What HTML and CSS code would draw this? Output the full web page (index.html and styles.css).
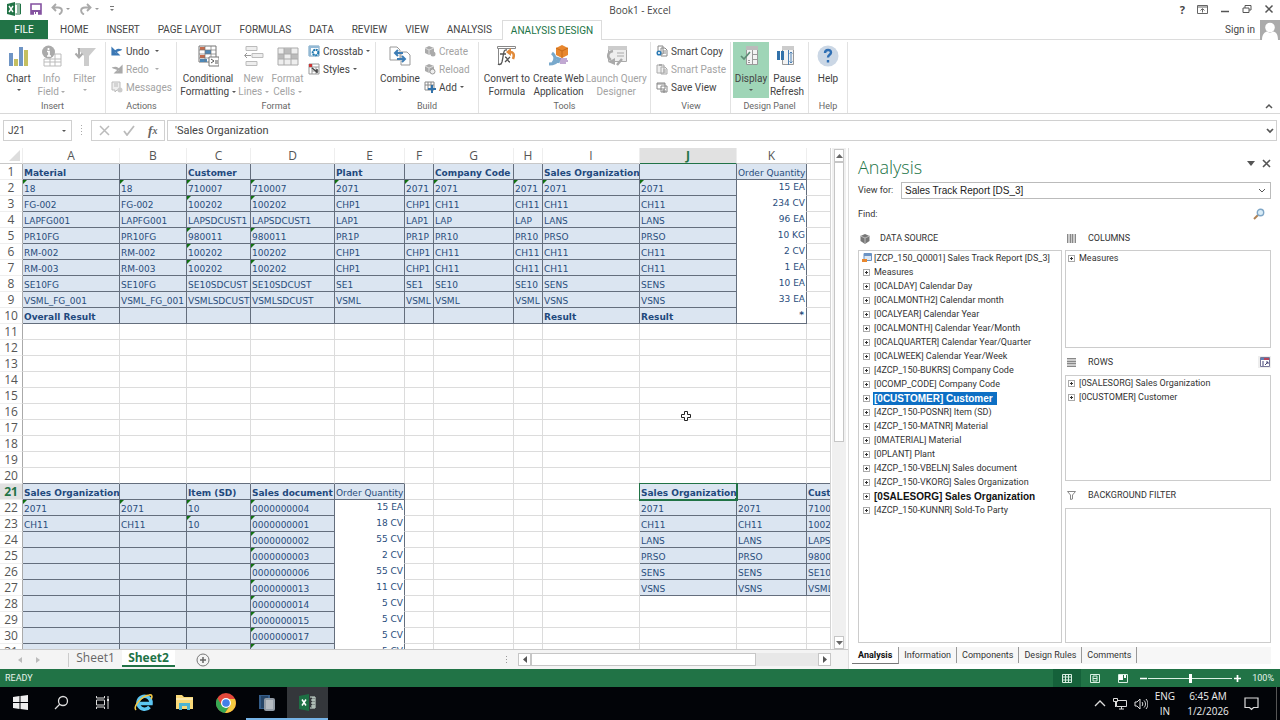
FILE: index.html
```html
<!DOCTYPE html>
<html lang="en">
<head>
<meta charset="utf-8">
<title>Book1 - Excel</title>
<link rel="stylesheet" href="styles.css">
</head>
<body>
<div class="app">
  <header class="titlebar">
    <div class="quick">
      <svg width="14" height="14" viewBox="0 0 14 14"><path fill="#217346" d="M0 2 8 0v14l-8-2z"/><path d="M8.500 2h5v10h-5M10 4h3M10 6h3M10 8h3M10 10h3" fill="none" stroke="#217346"/><path d="m2 4 4 6M6 4 2 10" stroke="#fff" stroke-width="1.400"/></svg>
      <button aria-label="Save"><svg width="12" height="12" viewBox="0 0 12 12"><path d="M1 1h10v10H1z" fill="#fff" stroke="#8452a0" stroke-width="1.600"/><path d="M1 7h10v4H1z" fill="#8452a0"/><path d="M4 9h4v3H4z" fill="#fff"/><path d="M5 9h1v2H5z" fill="#8452a0"/></svg></button>
      <button aria-label="Undo"><svg width="20" height="12" viewBox="0 0 20 12"><path d="M5 1 1.500 4.500 5 8M2 4.500h5c5 0 5 5 1 7" fill="none" stroke="#aaa" stroke-width="1.900"/><path d="M15 5h4l-2 2z" fill="#999"/></svg></button>
      <button aria-label="Redo"><svg width="20" height="12" viewBox="0 0 20 12"><path d="m7 1 3.500 3.500L7 8M10 4.500H5c-5 0-5 5-1 7" fill="none" stroke="#aaa" stroke-width="1.900"/><path d="M15 5h4l-2 2z" fill="#999"/></svg></button>
      <button aria-label="Customize"><svg width="6" height="8" viewBox="0 0 6 8"><path d="M1 1.500h4" stroke="#777"/><path d="M1 4h4L3 6z" fill="#777"/></svg></button>
    </div>
    <div class="doc-title">Book1 - Excel</div>
    <div class="window-controls">
      <button aria-label="Help" class="q">?</button>
      <button aria-label="Ribbon display"><svg width="11" height="9" viewBox="0 0 11 9"><path d="M.5.500h10v8H.500zM.5 2h10M5.500 7.500V4M3.500 5.500l2-2 2 2" fill="none" stroke="#666"/></svg></button>
      <button aria-label="Minimize"><svg width="10" height="10" viewBox="0 0 10 10"><path d="M1 7.500h8" stroke="#555" stroke-width="1.500"/></svg></button>
      <button aria-label="Restore"><svg width="10" height="10" viewBox="0 0 10 10"><path d="M1 4h6v4.500H1zM3 4V1.500h6v4.500H7" fill="none" stroke="#555"/></svg></button>
      <button aria-label="Close"><svg width="10" height="10" viewBox="0 0 10 10"><path d="m1.500 1.500 7 7m0-7-7 7" stroke="#555" stroke-width="1.500"/></svg></button>
    </div>
  </header>

  <nav class="tabs">
    <button class="file">FILE</button>
    <button class="tab">HOME</button>
    <button class="tab">INSERT</button>
    <button class="tab">PAGE LAYOUT</button>
    <button class="tab">FORMULAS</button>
    <button class="tab">DATA</button>
    <button class="tab">REVIEW</button>
    <button class="tab">VIEW</button>
    <button class="tab">ANALYSIS</button>
    <button class="tab active">ANALYSIS DESIGN</button>
    <a class="signin" href="#">Sign in</a>
    <svg width="20" height="20" viewBox="0 0 20 20"><path fill="#ababab" d="M0 0h20v20H0z"/><circle cx="10" cy="7.500" r="4.800" fill="#fff"/><path d="M2 20c0-6 3-8 5-8.500 2 1.500 4 1.500 6 0 3 .5 5 2.500 5 8.500z" fill="#fff"/></svg>
  </nav>

  <section class="ribbon" aria-label="Ribbon">
    <div class="group g-insert">
      <div class="group-body">
        <button class="big w33"><svg width="22" height="22" viewBox="0 0 22 22"><path fill="#6f95c5" d="M1 8h4v13H1zM11 2h4v19h-4z"/><path fill="#c5bf60" d="M6 14h4v7H6zM16 5h4v16h-4z"/></svg><span>Chart</span><i class="caret"></i></button>
        <button class="big w33" disabled><svg width="22" height="22" viewBox="0 0 22 22"><path d="M5 9h15v12H3v-7M3 14h17M3 17h17M9 9v12M14 9v12" fill="none" stroke="#bbb"/><circle cx="7.500" cy="7" r="6.500" fill="#aaa"/><path d="M7.500 3v2M6 6.500h2V11M6 11h4" stroke="#fff" stroke-width="1.700" fill="none"/></svg><span>Info<br>Field <i class="caret"></i></span></button>
        <button class="big w33" disabled><svg width="22" height="22" viewBox="0 0 22 22"><path d="M3 3h19l-7 8v10h-5V11z" fill="#ccc"/><path d="M5 3v9M1.500 8.500l3.500 4 3.500-4" stroke="#aaa" stroke-width="2" fill="none"/></svg><span>Filter</span><i class="caret"></i></button>
      </div>
      <div class="group-label">Insert</div>
    </div>
    <div class="group g-actions">
      <div class="group-body">
        <div class="stack">
          <button class="small"><svg width="12" height="12" viewBox="0 0 12 12"><path d="M1 3v7h7zM3 8c2-4 4-4 8-3" fill="#3b78b5" stroke="#3b78b5" stroke-width="1.200"/><path d="M5 9c2-2 4-2 6-1V5z" fill="#fff"/></svg>Undo <i class="caret far"></i></button>
          <button class="small" disabled><svg width="12" height="12" viewBox="0 0 12 12"><path d="M11 3v7H4zM9 8C7 4 5 4 1 5" fill="#aaa" stroke="#aaa" stroke-width="1.200"/><path d="M7 9C5 7 3 7 1 8V5z" fill="#fff"/></svg>Redo <i class="caret far"></i></button>
          <button class="small" disabled><svg width="12" height="12" viewBox="0 0 12 12"><path d="M1 1h8v8H6L4 11V9H1zM3 3h4M3 5h4" fill="#eee" stroke="#bbb"/><circle cx="9" cy="9" r="2.500" fill="#ccc"/></svg>Messages</button>
        </div>
      </div>
      <div class="group-label">Actions</div>
    </div>
    <div class="group g-format">
      <div class="group-body">
        <button class="big w58"><svg width="22" height="22" viewBox="0 0 22 22"><path d="M2 1h17v16H2z" fill="#fff" stroke="#777"/><path d="M3 2h5v3H3zM3 10h5v3H3z" fill="#c56a4b"/><path d="M8 5h6v4H8zM3 14h7v3H3z" fill="#4d88b8"/><path d="M2 5h17M2 9h17M2 13h17M8 1v16M14 1v16" stroke="#777" stroke-width=".7"/><path d="M12 12h10v9H12z" fill="#fff" stroke="#777"/><path d="m14 14 3 2-3 2m4-2h3m-3 2h3" fill="none" stroke="#555"/></svg><span>Conditional<br>Formatting <i class="caret"></i></span></button>
        <button class="big w33" disabled><svg width="22" height="22" viewBox="0 0 22 22"><path d="M3 1.500h11v4H3zM9 8.500h11v4H9zM3 16.500h11v4H3z" fill="#eee" stroke="#bbb"/><path d="M8 10.500H2M4 8l-2.500 2.500L4 13" fill="none" stroke="#999"/></svg><span>New<br>Lines <i class="caret"></i></span></button>
        <button class="big w35" disabled><svg width="22" height="22" viewBox="0 0 22 22"><path d="M1 3h20v17H1z" fill="#eee" stroke="#aaa"/><path d="M7 3h7v6H7zM1 9h6v5H1zM14 9h7v5h-7z" fill="#bbb"/><path d="M1 9h20M1 14h20M7 3v17M14 3v17" stroke="#aaa"/></svg><span>Format<br>Cells <i class="caret"></i></span></button>
        <div class="stack">
          <button class="small"><svg width="12" height="12" viewBox="0 0 12 12"><path d="M1 1h10v10H1z" fill="#fff" stroke="#6b9cbf"/><path d="M1 1h10v2H1zM1 1h2v10H1z" fill="#93b9d5"/><circle cx="7.500" cy="7.500" r="2.800" fill="#fff" stroke="#1e78b0" stroke-width="2" stroke-dasharray="2 .6"/></svg>Crosstab <i class="caret"></i></button>
          <button class="small"><svg width="12" height="12" viewBox="0 0 12 12"><path d="M1 1h10v10H1zM1 4h10M4 1v10M8 4v7M4 8h7" fill="#fff" stroke="#999"/><path d="M1 1h3v3H1z" fill="#c33"/><path d="m4 5 5 4M9 6v4" stroke="#444" stroke-width="1.500"/></svg>Styles <i class="caret"></i></button>
        </div>
      </div>
      <div class="group-label">Format</div>
    </div>
    <div class="group g-build">
      <div class="group-body">
        <button class="big w44"><svg width="22" height="22" viewBox="0 0 22 22"><path d="M1 2h7l3 3v10H1zM12 7h6l3 3v10h-9z" fill="#fff" stroke="#999"/><path d="M6 8h8M9 5 6 8l3 3M8 14h8M13 11l3 3-3 3" fill="none" stroke="#3d7db5" stroke-width="2"/></svg><span>Combine</span><i class="caret"></i></button>
        <div class="stack">
          <button class="small" disabled><svg width="12" height="12" viewBox="0 0 12 12"><path d="m5 1 5 2v5L5 10 1 8V3z" fill="#aaa"/><path d="m1 3 4 2 5-2M5 5v5" stroke="#ddd" fill="none"/><circle cx="9" cy="9" r="2.500" fill="#aaa"/></svg>Create</button>
          <button class="small" disabled><svg width="12" height="12" viewBox="0 0 12 12"><path d="m5 1 5 2v5L5 10 1 8V3z" fill="#aaa"/><path d="m1 3 4 2 5-2M5 5v5" stroke="#ddd" fill="none"/><circle cx="8.500" cy="8.500" r="2.500" fill="#eee" stroke="#999"/></svg>Reload</button>
          <button class="small"><svg width="12" height="12" viewBox="0 0 12 12"><path d="M1 1h9v8H1zM1 4h9M4 1v8M7 1v8" fill="#fff" stroke="#888"/><path d="M8 4v8M4 8h8" stroke="#3272aa" stroke-width="2"/></svg>Add <i class="caret"></i></button>
        </div>
      </div>
      <div class="group-label">Build</div>
    </div>
    <div class="group g-tools">
      <div class="group-body">
        <button class="big w52"><svg width="22" height="22" viewBox="0 0 22 22"><path d="M1.500 1.500h18v2h-18zM2.500 4v15h3" fill="#fff" stroke="#888"/><path d="M11 5c-4-1-3 4-5 12-1 3-3 3-4 2M4 9h6M9 12c3 0 2 5 5 5m0-5-5 5" fill="none" stroke="#555" stroke-width="1.300"/><path d="M17 14c2-5 0-7-3-7" fill="none" stroke="#e18a3a" stroke-width="2.500"/><path d="M15 3v8l-5-4z" fill="#e18a3a"/></svg><span>Convert to<br>Formula</span></button>
        <button class="big w52"><svg width="22" height="22" viewBox="0 0 22 22"><path d="m14 0 6 3v7l-6 3-6-3V3z" fill="#e8872e"/><path d="m8 3 6 3 6-3M14 6v7" stroke="#c86a18" fill="none"/><path d="M4 8c4 3 4 6 1 10M1 19c5 0 8-1 10-5M8 13l3 1-1 4" fill="none" stroke="#79a9cc" stroke-width="3"/><path d="M12 14h7M12 16h8M12 18h6" stroke="#8353a5"/></svg><span>Create Web<br>Application</span></button>
        <button class="big w64" disabled><svg width="22" height="22" viewBox="0 0 22 22"><path d="M3.500 1.500h18v15h-18z" fill="#eee" stroke="#aaa"/><path d="M3 1h19v4H3z" fill="#ccc"/><path d="M12 8h7M12 11h7" stroke="#aaa"/><path d="M8 6c-6 1-6 7-2 9M12 20l5-6" fill="none" stroke="#aaa" stroke-width="2.500"/><path d="m3 17 7-4v7z" fill="#aaa"/></svg><span>Launch Query<br>Designer</span></button>
      </div>
      <div class="group-label">Tools</div>
    </div>
    <div class="group g-view">
      <div class="group-body">
        <div class="stack">
          <button class="small"><svg width="12" height="12" viewBox="0 0 12 12"><path d="M2 1h5v8H2zM5 3h4l2 2v6H5zM7 6h3M7 8h3" fill="#fff" stroke="#888"/><circle cx="3" cy="8" r="1.800" fill="#fff" stroke="#2a7ab5" stroke-width="1.500"/></svg>Smart Copy</button>
          <button class="small" disabled><svg width="12" height="12" viewBox="0 0 12 12"><path d="M1 2h7v8H1zM5 4h4l2 2v5H5zM7 7h3M7 9h3" fill="#eee" stroke="#aaa"/><path d="M3 1h3v2H3z" fill="#aaa"/></svg>Smart Paste</button>
          <button class="small"><svg width="12" height="12" viewBox="0 0 12 12"><path d="M1 2h8v6H1zM1 3h8M5 5h6v6H5zM7 9h2v2H7z" fill="#fff" stroke="#888"/></svg>Save View</button>
        </div>
      </div>
      <div class="group-label">View</div>
    </div>
    <div class="group g-panel">
      <div class="group-body">
        <button class="big w36 on"><svg width="22" height="22" viewBox="0 0 22 22"><path d="M6.500 1.500h11v18h-11z" fill="#f3f3f3" stroke="#999"/><path d="M6 1h12v4H6z" fill="#bbb"/><path d="M12.500 5v15M12 9.500h5M12 14.500h5M8 15.500h2M8 17.500h2" stroke="#999"/><path d="m1 11 3 3 6-7" fill="none" stroke="#5d8d75" stroke-width="1.700"/></svg><span>Display</span><i class="caret"></i></button>
        <button class="big w36"><svg width="22" height="22" viewBox="0 0 22 22"><path d="M6.500 1.500h11v18h-11z" fill="#f3f3f3" stroke="#999"/><path d="M6 1h12v4H6z" fill="#ccc"/><path d="M12.500 5v15M15 7v11M13.500 8.500 15 7l1.500 1.500M13.500 16.500 15 18l1.500-1.500" fill="none" stroke="#4d81b5"/><path d="M1 6h3v9H1zM5 6h3v9H5z" fill="#3272aa"/></svg><span>Pause<br>Refresh</span></button>
      </div>
      <div class="group-label">Design Panel</div>
    </div>
    <div class="group g-help">
      <div class="group-body">
        <button class="big w36"><svg width="22" height="22" viewBox="0 0 22 22"><circle cx="11" cy="11" r="10.500" fill="#cbd7e5"/><path d="M8 8c0-4 6-4 6-.5 0 2.500-3 2-3 5M11 15v2.500" fill="none" stroke="#2f6fb4" stroke-width="2.400"/></svg><span>Help</span></button>
      </div>
      <div class="group-label">Help</div>
    </div>
    <button class="collapse" aria-label="Collapse ribbon"><svg width="8" height="6" viewBox="0 0 8 6"><path d="m1 5 3-3 3 3" fill="none" stroke="#555" stroke-width="1.500"/></svg></button>
  </section>

  <section class="formula-bar">
    <div class="name-box"><input aria-label="Name box" value="J21"><i class="caret"></i></div>
    <svg class="dots" width="3" height="10" viewBox="0 0 3 10"><path d="M1.500 0v10" stroke="#aaa" stroke-dasharray="1 2"/></svg>
    <div class="fx-box">
      <button aria-label="Cancel"><svg width="11" height="11" viewBox="0 0 11 11"><path d="m1 1 9 9m0-9-9 9" stroke="#bbb" stroke-width="1.500"/></svg></button>
      <button aria-label="Enter"><svg width="12" height="11" viewBox="0 0 12 11"><path d="m1 6 3 4 7-9" fill="none" stroke="#bbb" stroke-width="1.800"/></svg></button>
      <button aria-label="Insert function" class="fx">f<small>x</small></button>
    </div>
    <div class="formula"><input aria-label="Formula" value="'Sales Organization"><svg width="8" height="6" viewBox="0 0 8 6"><path d="m1 1 3 3 3-3" fill="none" stroke="#555" stroke-width="1.700"/></svg></div>
  </section>

  <main class="workspace">
    <div class="book">
      <div class="sheet-area">
        <div class="sheet"><table class="grid" id="grid"></table>
          <svg class="cursor" width="12" height="12" viewBox="0 0 12 12"><path d="M4.500 1.500h3v3h3v3h-3v3h-3v-3h-3v-3h3z" fill="#fff" stroke="#222"/></svg>
        </div>
        <div class="vscroll">
          <button aria-label="Scroll up"><svg width="7" height="4" viewBox="0 0 7 4"><path d="M0 4h7L3.500 0z" fill="#666"/></svg></button>
          <div class="vthumb"></div>
          <button aria-label="Scroll down" class="end"><svg width="7" height="4" viewBox="0 0 7 4"><path d="M0 0h7L3.500 4z" fill="#666"/></svg></button>
        </div>
      </div>
      <div class="sheet-bar">
        <div class="sheet-nav">
          <button aria-label="Previous sheet"><svg width="4" height="6" viewBox="0 0 4 6"><path d="M4 0v6L0 3z" fill="#bbb"/></svg></button>
          <button aria-label="Next sheet"><svg width="4" height="6" viewBox="0 0 4 6"><path d="M0 0v6l4-3z" fill="#bbb"/></svg></button>
        </div>
        <button class="sheet-tab">Sheet1</button>
        <button class="sheet-tab active">Sheet2</button>
        <button class="add" aria-label="New sheet"><svg width="14" height="14" viewBox="0 0 14 14"><circle cx="7" cy="7" r="6" fill="none" stroke="#777"/><path d="M7 4v6M4 7h6" stroke="#666" stroke-width="1.500"/></svg></button>
        <svg class="grip" width="3" height="8" viewBox="0 0 3 8"><path d="M1.500 0v8" stroke="#999" stroke-dasharray="1 2"/></svg>
        <div class="hscroll">
          <button aria-label="Scroll left"><svg width="4" height="7" viewBox="0 0 4 7"><path d="M4 0v7L0 3.500z" fill="#555"/></svg></button>
          <div class="hthumb"></div>
          <button aria-label="Scroll right" class="end"><svg width="4" height="7" viewBox="0 0 4 7"><path d="M0 0v7l4-3.500z" fill="#555"/></svg></button>
        </div>
      </div>
    </div>

    <aside class="panel">
      <div class="panel-head">
        <h1>Analysis</h1>
        <button aria-label="Pane options"><svg width="8" height="5" viewBox="0 0 8 5"><path d="M0 0h8L4 5z" fill="#555"/></svg></button>
        <button aria-label="Close pane"><svg width="9" height="9" viewBox="0 0 9 9"><path d="m1 1 7 7m0-7L1 8" stroke="#555" stroke-width="1.600"/></svg></button>
      </div>
      <div class="view-for">
        <label for="view">View for:</label>
        <div class="select"><select id="view"><option>Sales Track Report [DS_3]</option></select><svg width="8" height="5" viewBox="0 0 8 5"><path d="m1 1 3 3 3-3" fill="none" stroke="#555"/></svg></div>
      </div>
      <div class="find">
        <label for="find">Find:</label><input id="find">
        <button aria-label="Search"><svg width="12" height="12" viewBox="0 0 12 12"><path d="m1 11 4-4" stroke="#b08254" stroke-width="2"/><circle cx="7.500" cy="4.500" r="3.200" fill="#d9ecf7" stroke="#7fa6c6" stroke-width="1.400"/></svg></button>
      </div>
      <div class="panes">
        <section class="pane source">
          <h2><svg width="10" height="10" viewBox="0 0 10 10"><path d="m5 0 4.500 2v5L5 10 .5 7V2z" fill="#777"/><path d="m.5 2 4.500 2 4.500-2M5 4v6" fill="none" stroke="#bbb"/></svg>DATA SOURCE</h2>
          <ul class="tree box">
            <li class="root"><svg width="10" height="10" viewBox="0 0 10 10"><path d="M2 .5h7.500v7H2z" fill="#dce8f5" stroke="#6b93c4"/><path d="M2 1h8v2H2z" fill="#6b93c4"/><path d="M0 6h5v3H0z" fill="#e8872e"/></svg><span>[ZCP_150_Q0001] Sales Track Report [DS_3]</span></li>
            <li><b class="plus"></b><span>Measures</span></li>
            <li><b class="plus"></b><span>[0CALDAY] Calendar Day</span></li>
            <li><b class="plus"></b><span>[0CALMONTH2] Calendar month</span></li>
            <li><b class="plus"></b><span>[0CALYEAR] Calendar Year</span></li>
            <li><b class="plus"></b><span>[0CALMONTH] Calendar Year/Month</span></li>
            <li><b class="plus"></b><span>[0CALQUARTER] Calendar Year/Quarter</span></li>
            <li><b class="plus"></b><span>[0CALWEEK] Calendar Year/Week</span></li>
            <li><b class="plus"></b><span>[4ZCP_150-BUKRS] Company Code</span></li>
            <li><b class="plus"></b><span>[0COMP_CODE] Company Code</span></li>
            <li><b class="plus"></b><span class="strong selected">[0CUSTOMER] Customer</span></li>
            <li><b class="plus"></b><span>[4ZCP_150-POSNR] Item (SD)</span></li>
            <li><b class="plus"></b><span>[4ZCP_150-MATNR] Material</span></li>
            <li><b class="plus"></b><span>[0MATERIAL] Material</span></li>
            <li><b class="plus"></b><span>[0PLANT] Plant</span></li>
            <li><b class="plus"></b><span>[4ZCP_150-VBELN] Sales document</span></li>
            <li><b class="plus"></b><span>[4ZCP_150-VKORG] Sales Organization</span></li>
            <li><b class="plus"></b><span class="strong">[0SALESORG] Sales Organization</span></li>
            <li><b class="plus"></b><span>[4ZCP_150-KUNNR] Sold-To Party</span></li>
          </ul>
        </section>
        <div class="axes">
          <section class="pane columns">
            <h2><svg width="9" height="9" viewBox="0 0 9 9"><path d="M0 0h9v9H0z" fill="#ccc"/><path d="M.5 0v9M3.500 0v9M5.500 0v9M8.500 0v9" stroke="#888"/></svg>COLUMNS</h2>
            <ul class="tree box"><li><b class="plus"></b><span>Measures</span></li></ul>
          </section>
          <section class="pane rows">
            <h2><svg width="9" height="9" viewBox="0 0 9 9"><path d="M0 0h9v9H0z" fill="#ccc"/><path d="M0 .5h9M0 3.500h9M0 5.500h9M0 8.500h9" stroke="#888"/></svg>ROWS<button aria-label="Swap axes"><svg width="10" height="10" viewBox="0 0 10 10"><path d="M.5.500h9v9h-9z" fill="#fff" stroke="#779"/><path d="M1 1h3v2H1z" fill="#5b7fb5"/><path d="M4 1h5v2H4z" fill="#b5445b"/><path d="M3 4v5M5 8l3-3M6 5h2v2" stroke="#447" fill="none"/></svg></button></h2>
            <ul class="tree box"><li><b class="plus"></b><span>[0SALESORG] Sales Organization</span></li><li><b class="plus"></b><span>[0CUSTOMER] Customer</span></li></ul>
          </section>
          <section class="pane background">
            <h2><svg width="9" height="9" viewBox="0 0 9 9"><path d="M.5.500h8L5.500 4v4l-2 .5V4z" fill="none" stroke="#888"/></svg>BACKGROUND FILTER</h2>
            <ul class="tree box"></ul>
          </section>
        </div>
      </div>
      <nav class="panel-tabs">
        <button class="active">Analysis</button><button>Information</button><button>Components</button><button>Design Rules</button><button>Comments</button>
      </nav>
    </aside>
  </main>

  <footer class="status">
    <span>READY</span>
    <button class="view-mode on" aria-label="Normal view"><svg width="10" height="9" viewBox="0 0 10 9"><path d="M.5.500h9v8h-9zM.5 3h9M.5 6h9M3.500.5v8M6.500.5v8" fill="none" stroke="#d9efe2"/></svg></button>
    <button class="view-mode" aria-label="Page layout"><svg width="10" height="9" viewBox="0 0 10 9"><path d="M.5.500h9v8h-9zM3 2h4v5H3zM3 4.500h4" fill="none" stroke="#d9efe2"/></svg></button>
    <button class="view-mode" aria-label="Page break preview"><svg width="10" height="9" viewBox="0 0 10 9"><path d="M.5.500h9v8h-9z" fill="none" stroke="#d9efe2"/><path d="M1 1h4v5H1zM6 1h2v3H6z" fill="#fff"/></svg></button>
    <button class="zoom-step" aria-label="Zoom out"><svg width="7" height="7" viewBox="0 0 7 7"><path d="M0 3.500h7" stroke="#fff" stroke-width="1.500"/></svg></button>
    <input class="zoom" type="range" min="0" max="100" value="50" aria-label="Zoom">
    <button class="zoom-step" aria-label="Zoom in"><svg width="7" height="7" viewBox="0 0 7 7"><path d="M0 3.500h7M3.500 0v7" stroke="#fff" stroke-width="1.700"/></svg></button>
    <span class="percent">100%</span>
  </footer>

  <footer class="taskbar">
    <button aria-label="Start"><svg width="15" height="15" viewBox="0 0 15 15"><path d="m0 2 6.500-1v6H0zM7.500 1 15 0v7H7.500zM0 8h6.500v6L0 13zM7.500 8H15v7l-7.500-1z" fill="#eee"/></svg></button>
    <button aria-label="Search"><svg width="15" height="15" viewBox="0 0 15 15"><circle cx="9" cy="6" r="4.500" fill="none" stroke="#ddd" stroke-width="1.300"/><path d="m6 9-5 5" stroke="#ddd" stroke-width="1.300"/></svg></button>
    <button aria-label="Task view"><svg width="15" height="13" viewBox="0 0 15 13"><path d="M1.500 4h8v5h-8zM1.500 0v2h8V0M1.500 13v-2h8v2M13 0v13" fill="none" stroke="#ddd"/><path d="M12 3h2v2h-2z" fill="#ddd"/></svg></button>
    <button aria-label="Internet Explorer"><svg width="20" height="20" viewBox="0 0 20 20"><path d="M15.500 14A6.500 6.500 0 1 1 17 10.500H6" fill="none" stroke="#5cc6f2" stroke-width="3.600"/><path d="M2 17C-1 14 7 3 15 2c4-1 3 3 2 4" fill="none" stroke="#f3c845" stroke-width="1.600"/></svg></button>
    <button aria-label="File Explorer"><svg width="19" height="17" viewBox="0 0 19 17"><path d="M1 1h6l2 2h9v12H1z" fill="#f9d978"/><path d="M1 4h17v2H1z" fill="#fbe9ac"/><path d="M4 9h11v7h-3v-4H7v4H4z" fill="#4db4d2"/></svg></button>
    <button aria-label="Chrome"><svg width="20" height="20" viewBox="0 0 20 20"><circle cx="10" cy="10" r="10" fill="#e4493c"/><path d="M1.300 5A10 10 0 0 0 9 20l5-8-8.500 0z" fill="#36a852"/><path d="M19 6H10l4.500 6L9 20A10 10 0 0 0 19 6z" fill="#f6cb3f"/><circle cx="10" cy="10" r="5" fill="#fff"/><circle cx="10" cy="10" r="3.800" fill="#437fe8"/></svg></button>
    <button aria-label="SAP Logon" class="running"><svg width="18" height="18" viewBox="0 0 18 18"><path d="M1 1h11v14H1z" fill="#345d8a"/><path d="M3 2h7v12H3z" fill="#254466"/><rect x="6" y="4" width="11" height="13" rx="2" fill="#929ba5"/><path d="M8 6h7v9H8z" fill="#b6bcc2"/></svg></button>
    <button aria-label="Excel" class="running current"><svg width="17" height="17" viewBox="0 0 17 17"><path d="M0 2 10 0v17L0 15z" fill="#1d7044"/><path d="M11 3h5v11h-5M14 3v11M12 6h4M12 9h4M12 12h4" fill="none" stroke="#d7eadf"/><path d="m3 5.500 4 6m0-6-4 6" stroke="#fff" stroke-width="1.500"/></svg></button>
    <div class="tray">
      <svg width="12" height="7" viewBox="0 0 12 7"><path d="m1 6 5-5 5 5" fill="none" stroke="#ddd" stroke-width="1.300"/></svg>
      <svg width="14" height="12" viewBox="0 0 14 12"><path d="M3.500 2.500h10v6h-10zM6 11h5M8.500 9v2" fill="none" stroke="#ddd"/><path d="M.5.500h4v3h-4zM2.500 4v5" fill="#000" stroke="#ddd"/></svg>
      <svg width="14" height="12" viewBox="0 0 14 12"><path d="M1 4h2l3-3v10L3 8H1zM8 4c1 1 1 3 0 4M10 2.500c2 2 2 5 0 7M12 1c2.500 3 2.500 7 0 10" fill="none" stroke="#ddd"/></svg>
      <div class="lang">ENG<br>IN</div>
      <div class="clock">6:45 AM<br>1/2/2026</div>
      <svg class="note" width="15" height="14" viewBox="0 0 15 14"><path d="M1 1h13v9.500H9.500l-2 2-2-2H1z" fill="none" stroke="#ddd" stroke-width="1.200"/></svg>
    </div>
  </footer>
</div>
<script src="grid.js"></script>
</body>
</html>
```

FILE: styles.css
```css
* { box-sizing: border-box; }
body { margin: 0; font-family: Roboto, "Open Sans", sans-serif; font-size: 10px; line-height: 13px; color: #444; background: #fff; }
button, input, select { font: inherit; color: inherit; background: none; border: 0; padding: 0; margin: 0; outline: 0; }
button { display: flex; align-items: center; justify-content: center; white-space: nowrap; }
svg { flex: none; display: block; }
h1, h2, ul { margin: 0; padding: 0; font-weight: normal; list-style: none; }
.app { display: flex; flex-direction: column; height: 100vh; overflow: hidden; }
.caret { display: inline-block; border: 2px solid transparent; border-top-color: #555; border-bottom: 0; vertical-align: middle; }
:disabled .caret { border-top-color: #aaa; }

.titlebar { display: grid; grid-template-columns: 1fr auto 1fr; align-items: center; height: 20px; flex: none; font-family: "Open Sans", sans-serif; }
.quick { display: flex; align-items: center; gap: 9px; padding-left: 7px; padding-bottom: 2px; }
.window-controls { display: flex; justify-content: flex-end; gap: 12px; padding-right: 6px; align-items: center; padding-bottom: 2px; }
.q { font-weight: bold; font-size: 11px; }

.tabs { display: flex; height: 20px; flex: none; border-bottom: 1px solid #dcdcdc; align-items: stretch; }
.file { width: 48px; background: #217346; color: #fff; margin-right: 4px; }
.tab { padding: 0 8px; margin-right: 2px; }
.tab.active { color: #217346; border: 1px solid #dcdcdc; border-bottom: 0; background: #fff; margin-bottom: -1px; }
.signin { margin-left: auto; padding-right: 5px; line-height: 19px; color: #444; text-decoration: none; }

.ribbon { display: flex; height: 74px; flex: none; border-bottom: 1px solid #d8d8d8; padding: 2px 0 0; }
.group { display: flex; flex-direction: column; border-right: 1px solid #e2e2e2; flex: none; padding: 0 2px; }
.group-body { display: flex; flex: 1; }
.group-label { text-align: center; font-size: 9px; line-height: 13px; color: #666; }
.g-insert { width: 106px; }
.g-actions { width: 71px; padding-left: 3px; }
.g-format { width: 199px; }
.g-build { width: 103px; }
.g-tools { width: 172px; }
.g-view { width: 80px; padding-left: 3px; }
.g-panel { width: 78px; }
.g-help { width: 39px; padding: 0 1px; }
.big { flex-direction: column; justify-content: flex-start; padding-top: 3px; height: 56px; line-height: 13px; text-align: center; }
.big svg { margin-bottom: 5px; }
.big > .caret { margin-top: 4px; }
.big:disabled, .small:disabled { color: #a3a3a3; }
.on { background: #9fd5b7; }
.w33 { width: 33px; }
.w35 { width: 35px; }
.w36 { width: 36px; }
.w44 { width: 44px; }
.w52 { width: 52px; }
.w58 { width: 58px; }
.w64 { width: 64px; }
.stack { display: flex; flex-direction: column; padding-left: 2px; }
.small { height: 18px; justify-content: flex-start; gap: 3px; }
.g-format .stack { padding-left: 3px; }
.caret.far { margin-left: 3px; }
.collapse { margin: auto 7px 2px auto; height: 10px; }

.formula-bar { display: flex; height: 34px; flex: none; padding: 6px 3px 7px; align-items: stretch; }
.name-box, .fx-box, .formula { border: 1px solid #d0d0d0; display: flex; align-items: center; background: #fff; }
.name-box { width: 69px; padding: 0 5px 0 4px; }
.name-box input { width: 100%; min-width: 0; }
.dots { margin: 5px 8px 0; }
.fx-box { width: 74px; justify-content: space-around; margin-right: 2px; }
.fx { font: italic bold 13px "Liberation Serif", serif; color: #666; }
.fx small { font-size: 10px; }
.formula { flex: 1; padding: 0 2px 0 7px; }
.formula input { flex: 1; font-size: 11px; }

.workspace { display: flex; flex: 1; min-height: 0; }
.book { flex: 1; min-width: 0; display: flex; flex-direction: column; border-right: 1px solid #ddd; }
.sheet-area { display: flex; flex: 1; min-height: 0; }
.sheet { flex: 1; min-width: 0; overflow: hidden; position: relative; border-right: 1px solid #d4d4d4; }
.cursor { position: absolute; left: 680px; top: 262px; }
.grid { table-layout: fixed; border-collapse: separate; border-spacing: 0; width: 831px; font-family: "DejaVu Sans", sans-serif; font-size: 9px; color: #294d7c; }
.grid th, .grid td { height: 16px; line-height: 12px; padding: 3px 0 0 1px; overflow: hidden; white-space: nowrap; border-right: 1px solid #dcdcdc; border-bottom: 1px solid #dcdcdc; position: relative; text-align: left; }
.grid th { font-family: "Open Sans", sans-serif; font-size: 12px; font-weight: normal; color: #555; text-align: center; padding: 0; line-height: 14px; }
.grid thead th { border-bottom-color: #c8c8c8; border-right-color: #eee; }
.grid tbody th { border-bottom-color: #eee; border-right-color: #aaa; }
.grid th.hot { background: #e1e1e1; color: #217346; font-weight: bold; }
.grid thead th.hot { border-bottom-color: #217346; }
.grid .corner::after { content: ""; position: absolute; right: 2px; bottom: 2px; border-left: 11px solid transparent; border-bottom: 11px solid #ddd; }
.grid td.fill { background: #dbe5f1; border-color: #646e7d; }
.grid td.head { font-weight: bold; color: #1f497d; }
.grid td.above { border-bottom-color: #646e7d; }
.grid td.qty { text-align: right; border-color: #fff; border-right-color: #646e7d; padding: 1px 1px 2px; background: #fff; }
.grid td.last { border-bottom-color: #646e7d; font-weight: bold; padding-right: 2px; }
.grid td.flag::before { content: ""; position: absolute; left: 0; top: 0; border-top: 4px solid #107010; border-right: 4px solid transparent; }
.grid td.picked { outline: 1px solid #217346; border-color: #217346; overflow: visible; z-index: 1; }
.grid td.picked::after { content: ""; position: absolute; right: -2px; bottom: -2px; width: 3px; height: 3px; background: #217346; }

.vscroll { width: 17px; padding: 1px 2px 0; display: flex; flex-direction: column; background: #f0f0f0; border-left: 1px solid #fff; border-right: 2px solid #fff; }
.vscroll button, .hscroll button { border: 1px solid #c6c6c6; background: #fff; flex: none; }
.vscroll button { height: 13px; }
.vthumb { height: 56%; background: #fff; border: 1px solid #c6c6c6; }
.end { margin-top: auto; }
.sheet-bar { display: flex; height: 20px; flex: none; background: #f4f4f4; border-top: 1px solid #c9c9c9; align-items: center; }
.sheet-nav { display: flex; gap: 14px; padding-left: 18px; width: 69px; border-right: 1px solid #ccc; height: 14px; }
.sheet-tab { width: 53px; height: 17px; font-family: "Open Sans", sans-serif; font-size: 12px; color: #666; align-self: flex-start; padding-bottom: 2px; }
.sheet-tab.active { background: #fff; color: #217346; font-weight: bold; border-bottom: 2px solid #217346; padding-bottom: 0; }
.add { margin-left: 21px; }
.grip { margin-left: auto; margin-right: 10px; }
.hscroll { width: 313px; height: 13px; display: flex; background: #e8e8e8; margin-right: 17px; }
.hscroll button { width: 13px; }
.hthumb { width: 225px; background: #fff; border: 1px solid #c6c6c6; }
.hscroll .end { margin: 0 0 0 auto; }

.panel { width: 431px; flex: none; display: flex; flex-direction: column; padding: 7px 9px 5px 9px; color: #333; font-size: 9px; }
.panel-head { display: flex; height: 26px; gap: 7px; padding: 2px 0 0; align-items: flex-start; }
.panel-head h1 { font-family: "Open Sans", sans-serif; font-size: 18px; line-height: 20px; font-weight: 300; color: #217346; margin-right: auto; }
.panel-head button { height: 12px; }
.view-for { display: flex; align-items: center; height: 18px; }
.view-for label { width: 43px; }
.select { flex: 1; height: 17px; border: 1px solid #bbb; display: flex; align-items: center; padding-right: 4px; }
.select select { appearance: none; flex: 1; padding: 0 3px; font-family: "Liberation Sans", sans-serif; font-size: 10px; line-height: 13px; color: #222; }
.find { display: flex; align-items: center; height: 30px; padding-right: 6px; }
.find input { flex: 1; }
.panes { flex: 1; min-height: 0; display: flex; gap: 3px; }
.source { width: 204px; flex: none; }
.pane { display: flex; flex-direction: column; }
.axes { flex: 1; display: flex; flex-direction: column; gap: 1px; }
.pane h2 { display: flex; align-items: center; gap: 12px; height: 21px; font-size: 9px; padding-left: 2px; padding-bottom: 2px; }
.source h2 { gap: 10px; }
.axes .rows h2, .axes .background h2 { height: 26px; padding-bottom: 0; }
.pane h2 button { margin-left: auto; width: 13px; height: 12px; background: #eee; }
.columns { height: 119px; }
.rows { height: 132px; }
.background { flex: 1; }
.box { flex: 1; border: 1px solid #ccc; padding: 0 3px; }
.axes .box { padding: 0 1px; }
.tree li { display: flex; align-items: center; height: 14px; gap: 4px; white-space: nowrap; }
.tree .root { gap: 2px; }
.plus { width: 7px; height: 7px; margin-left: 1px; border: 1px solid #aaa; flex: none; background: linear-gradient(#333, #333) center / 3px 1px no-repeat, linear-gradient(#333, #333) center / 1px 3px no-repeat; }
.strong { font-family: "Liberation Sans", sans-serif; font-weight: bold; font-size: 10px; color: #111; }
.strong.selected { background: #0d6fc4; color: #fff; padding-right: 4px; margin-left: -1px; padding-left: 1px; }
.panel-tabs { display: flex; height: 17px; margin: 4px 0 0 -6px; flex: none; background: #f7f7f7; }
.panel-tabs button { padding: 0 5px; border-right: 1px solid #999; height: 16px; }
.panel-tabs .active { font-weight: bold; color: #111; background: #fff; border-bottom: 1px solid #777; height: 17px; padding: 0 6px; }

.status { display: flex; align-items: center; height: 18px; flex: none; background: #217346; color: #e6f3ec; padding: 0 6px 0 5px; font-size: 9px; }
.status > :first-child { margin-right: auto; }
.view-mode { width: 28px; height: 18px; }
.view-mode.on { background: #15613a; }
.zoom-step { width: 9px; margin-left: 2px; }
.zoom { appearance: none; width: 84px; height: 12px; background: linear-gradient(#d9efe2, #d9efe2) center / 100% 1px no-repeat; }
.zoom::-webkit-slider-thumb { appearance: none; width: 3px; height: 9px; background: #fff; }
.zoom + .zoom-step { margin-left: 1px; }
.percent { margin-left: 10px; }

.taskbar { display: flex; height: 33px; flex: none; background: #020408; color: #eee; }
.taskbar button { width: 41px; border-bottom: 2px solid transparent; }
.taskbar .running { border-bottom-color: #76b3e6; }
.taskbar .current { background: #34373b; }
.tray { margin: 0 3px 0 auto; padding-right: 17px; border-right: 1px solid #555; display: flex; align-items: center; gap: 7px; font-family: "Open Sans", sans-serif; font-size: 10px; line-height: 15px; text-align: center; }
.clock { width: 52px; }
.note { margin-left: 3px; }
```

FILE: grid.js
```js
const letters = "ABCDEFGHIJKL".split("");
const widths = [97, 67, 64, 84, 70, 29, 80, 29, 97, 97, 70, 24];
const rowCount = 31;
const cells = {};

function put(row, firstCol, values, cls) {
  values.forEach((text, i) => { cells[letters[firstCol + i] + row] = { text, cls }; });
}
function addClass(ref, cls) { cells[ref].cls += " " + cls; }

put(1, 0, ["Material", "", "Customer", "", "Plant", "", "Company Code", "", "Sales Organization", ""], "fill head");
put(1, 10, ["Order Quantity"], "fill");
const sales = [
  ["18", "710007", "2071", "2071", "2071", "15 EA"],
  ["FG-002", "100202", "CHP1", "CH11", "CH11", "234 CV"],
  ["LAPFG001", "LAPSDCUST1", "LAP1", "LAP", "LANS", "96 EA"],
  ["PR10FG", "980011", "PR1P", "PR10", "PRSO", "10 KG"],
  ["RM-002", "100202", "CHP1", "CH11", "CH11", "2 CV"],
  ["RM-003", "100202", "CHP1", "CH11", "CH11", "1 EA"],
  ["SE10FG", "SE10SDCUST", "SE1", "SE10", "SENS", "10 EA"],
  ["VSML_FG_001", "VSMLSDCUST", "VSML", "VSML", "VSNS", "33 EA"]
];
sales.forEach((record, i) => {
  put(i + 2, 0, record.slice(0, 5).flatMap(v => [v, v]), "fill");
  put(i + 2, 10, [record[5]], "qty");
});
put(10, 0, ["Overall Result", "", "", "", "", "", "", "", "Result", "Result"], "fill head");
put(10, 10, ["*"], "qty last");
letters.slice(0, 10).forEach(c => addClass(c + 2, "flag"));
[3, 5, 6, 7].forEach(r => ["C", "D"].forEach(c => addClass(c + r, "flag")));

put(20, 0, ["", "", "", "", ""], "above");
put(20, 9, ["", "", ""], "above");
put(21, 0, ["Sales Organization", "", "Item (SD)", "Sales document"], "fill head");
put(21, 4, ["Order Quantity"], "fill");
const documents = [
  ["2071", "2071", "10", "0000000004", "15 EA"],
  ["CH11", "CH11", "10", "0000000001", "18 CV"],
  ["", "", "", "0000000002", "55 CV"],
  ["", "", "", "0000000003", "2 CV"],
  ["", "", "", "0000000006", "55 CV"],
  ["", "", "", "0000000013", "11 CV"],
  ["", "", "", "0000000014", "5 CV"],
  ["", "", "", "0000000015", "5 CV"],
  ["", "", "", "0000000017", "5 CV"],
  ["", "", "", "", "5 CV"]
];
documents.forEach((record, i) => {
  put(i + 22, 0, record.slice(0, 4), "fill");
  put(i + 22, 4, [record[4]], "qty");
  addClass("D" + (i + 22), "flag");
});
["A22", "B22", "C22", "C23"].forEach(ref => addClass(ref, "flag"));

put(21, 9, ["Sales Organization", "", "Cust"], "fill head");
addClass("J21", "picked");
[["2071", "7100"], ["CH11", "1002"], ["LANS", "LAPS"], ["PRSO", "9800"], ["SENS", "SE10"], ["VSNS", "VSML"]]
  .forEach(([org, customer], i) => put(i + 22, 9, [org, org, customer], "fill"));

let html = '<colgroup><col style="width:23px">' + widths.map(w => `<col style="width:${w}px">`).join("") + "</colgroup>";
html += '<thead><tr><th class="corner"></th>' + letters.map(c => `<th class="${c === "J" ? "hot" : ""}">${c === "L" ? "" : c}</th>`).join("") + "</tr></thead><tbody>";
for (let r = 1; r <= rowCount; r++) {
  html += `<tr><th class="${r === 21 ? "hot" : ""}">${r}</th>`;
  for (const c of letters) {
    const cell = cells[c + r] || { text: "", cls: "" };
    html += `<td class="${cell.cls}">${cell.text}</td>`;
  }
  html += "</tr>";
}
document.getElementById("grid").innerHTML = html + "</tbody>";
```
